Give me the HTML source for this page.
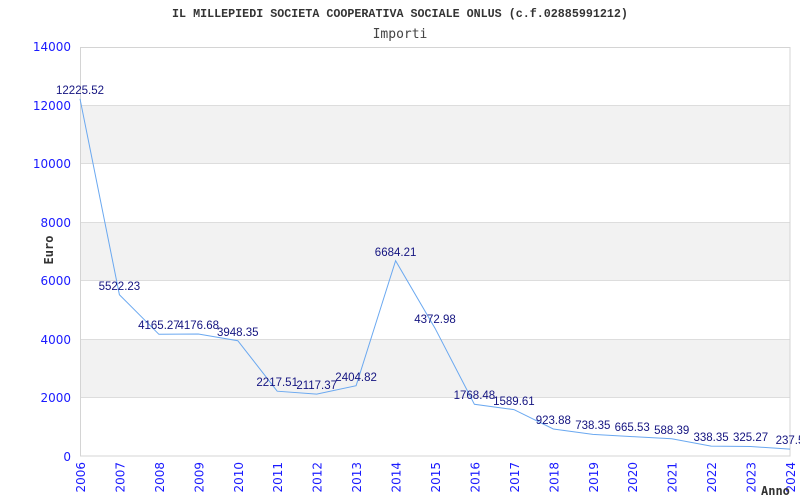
<!DOCTYPE html>
<html><head><style>
html,body{margin:0;padding:0;background:#fff;}
svg{display:block;}
</style></head><body>
<svg width="800" height="500" xmlns="http://www.w3.org/2000/svg">
<rect width="800" height="500" fill="#fff"/>
<text x="400" y="17" text-anchor="middle" font-family="Liberation Mono, monospace" font-weight="bold" font-size="11.7" fill="#333">IL MILLEPIEDI SOCIETA COOPERATIVA SOCIALE ONLUS (c.f.02885991212)</text>
<text x="400" y="38" text-anchor="middle" font-family="DejaVu Sans Mono, monospace" font-size="13" fill="#444">Importi</text>
<g fill="#f2f2f2">
<rect x="80.5" y="105.4" width="709.5" height="58.5"/>
<rect x="80.5" y="222.3" width="709.5" height="58.4"/>
<rect x="80.5" y="339.1" width="709.5" height="58.5"/>
</g>
<g stroke="#ddd" stroke-width="1">
<line x1="80.5" y1="105.5" x2="790" y2="105.5"/>
<line x1="80.5" y1="163.5" x2="790" y2="163.5"/>
<line x1="80.5" y1="222.5" x2="790" y2="222.5"/>
<line x1="80.5" y1="280.5" x2="790" y2="280.5"/>
<line x1="80.5" y1="339.5" x2="790" y2="339.5"/>
<line x1="80.5" y1="397.5" x2="790" y2="397.5"/>
</g>
<rect x="80.5" y="47.5" width="709.5" height="408.5" fill="none" stroke="#d4d4d4" stroke-width="1"/>
<g font-family="DejaVu Sans, sans-serif" font-size="12" fill="#1a1aff" text-anchor="end">
<text x="71" y="51">14000</text>
<text x="71" y="110">12000</text>
<text x="71" y="168">10000</text>
<text x="71" y="227">8000</text>
<text x="71" y="285">6000</text>
<text x="71" y="344">4000</text>
<text x="71" y="402">2000</text>
<text x="71" y="461">0</text>
</g>
<text transform="translate(53,250) rotate(-90)" text-anchor="middle" font-family="DejaVu Sans Mono, monospace" font-weight="bold" font-size="12" fill="#333">Euro</text>
<g font-family="DejaVu Sans, sans-serif" font-size="12" fill="#1a1aff" text-anchor="end">
<text transform="translate(85,462) rotate(-90)">2006</text>
<text transform="translate(124.4,462) rotate(-90)">2007</text>
<text transform="translate(163.9,462) rotate(-90)">2008</text>
<text transform="translate(203.3,462) rotate(-90)">2009</text>
<text transform="translate(242.8,462) rotate(-90)">2010</text>
<text transform="translate(282.2,462) rotate(-90)">2011</text>
<text transform="translate(321.7,462) rotate(-90)">2012</text>
<text transform="translate(361.1,462) rotate(-90)">2013</text>
<text transform="translate(400.6,462) rotate(-90)">2014</text>
<text transform="translate(440,462) rotate(-90)">2015</text>
<text transform="translate(479.4,462) rotate(-90)">2016</text>
<text transform="translate(518.9,462) rotate(-90)">2017</text>
<text transform="translate(558.3,462) rotate(-90)">2018</text>
<text transform="translate(597.8,462) rotate(-90)">2019</text>
<text transform="translate(637.2,462) rotate(-90)">2020</text>
<text transform="translate(676.7,462) rotate(-90)">2021</text>
<text transform="translate(716.1,462) rotate(-90)">2022</text>
<text transform="translate(755.6,462) rotate(-90)">2023</text>
<text transform="translate(795,462) rotate(-90)">2024</text>
</g>
<text x="761" y="495" font-family="DejaVu Sans Mono, monospace" font-weight="bold" font-size="12" fill="#333">Anno</text>
<polyline fill="none" stroke="#6aa8f0" stroke-width="1" points="80,98.8 119.4,294.7 158.9,334.3 198.3,334 237.8,340.7 277.2,391.2 316.7,394.1 356.1,385.7 395.6,260.7 435,328.2 474.4,404.3 513.9,409.6 553.3,429 592.8,434.4 632.2,436.6 671.7,438.8 711.1,446.1 750.6,446.5 790,449.1"/>
<g font-family="Liberation Sans, sans-serif" font-size="11.5" fill="#141480" text-anchor="middle">
<text x="80" y="94">12225.52</text>
<text x="119.4" y="290">5522.23</text>
<text x="158.9" y="329">4165.27</text>
<text x="198.3" y="329">4176.68</text>
<text x="237.8" y="336">3948.35</text>
<text x="277.2" y="386">2217.51</text>
<text x="316.7" y="389">2117.37</text>
<text x="356.1" y="381">2404.82</text>
<text x="395.6" y="256">6684.21</text>
<text x="435" y="323">4372.98</text>
<text x="474.4" y="399">1768.48</text>
<text x="513.9" y="405">1589.61</text>
<text x="553.3" y="424">923.88</text>
<text x="592.8" y="429">738.35</text>
<text x="632.2" y="431">665.53</text>
<text x="671.7" y="434">588.39</text>
<text x="711.1" y="441">338.35</text>
<text x="750.6" y="441">325.27</text>
<text x="790" y="444">237.5</text>
</g>
</svg>
</body></html>
